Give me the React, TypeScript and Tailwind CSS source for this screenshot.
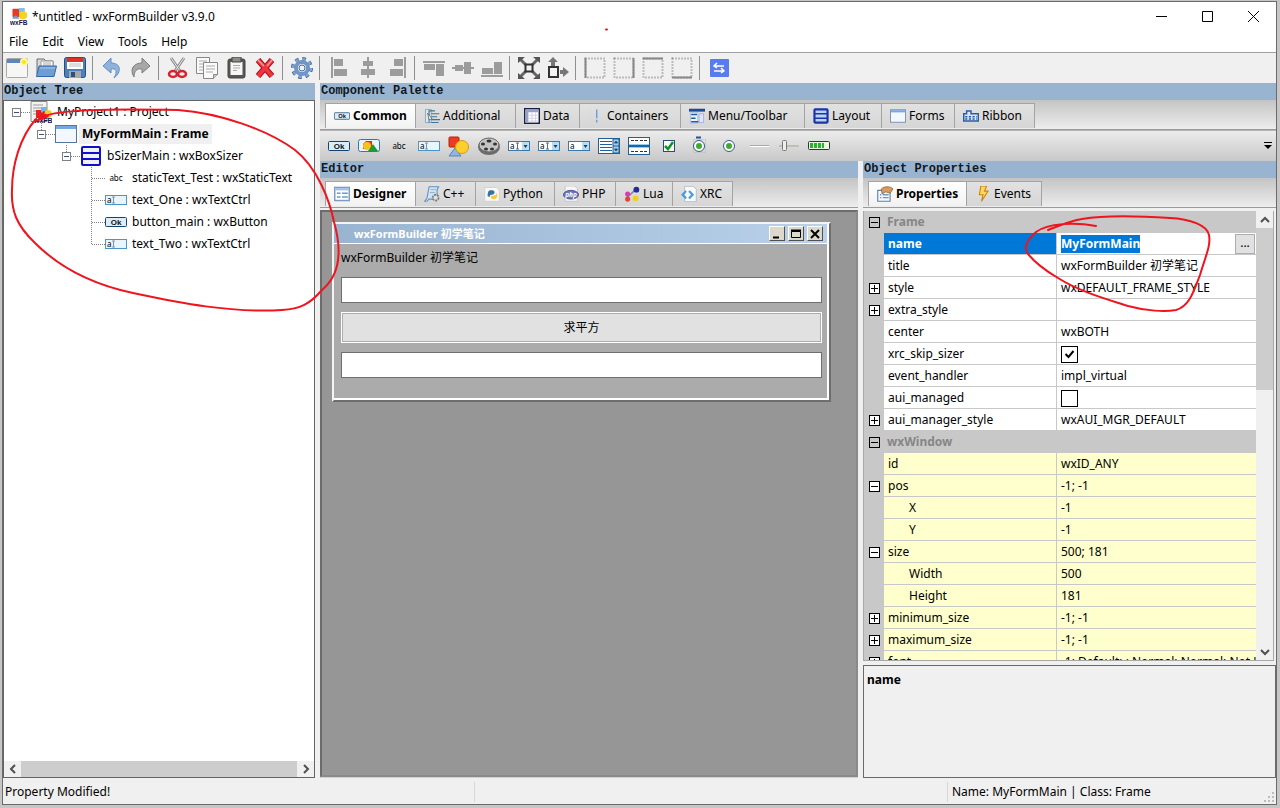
import React, { useState } from 'react';
import { clsx } from 'clsx';

type IconProps = { name: string; className?: string };

const glyphs: Record<string, React.ReactNode> = {
  logo: (
    <>
      <rect x="3" y="1" width="9" height="10" rx="1" fill="#e33b24" />
      <rect x="11" y="0" width="7" height="8" fill="#83bfe8" />
      <circle cx="16" cy="9" r="5" fill="#f8d21c" />
      <path d="M3 12l4-3 5 4H3z" fill="#6aa0d8" />
      <text x="0" y="21" fontFamily="Liberation Sans" fontWeight="bold" fontSize="8" fill="#15154d">wxFB</text>
    </>
  ),
  project: (
    <>
      <path d="M1 .5h16v20H1z" fill="#f3f3f3" stroke="#8b8b8b" />
      <path d="M3 4h10M3 7h10M3 10h7M3 13h5" stroke="#9a9a9a" />
      <rect x="6" y="9" width="8" height="8" fill="#e6201b" />
      <rect x="11" y="6" width="6" height="6" fill="#74b4e4" />
      <circle cx="18" cy="13" r="4" fill="#f5ce25" />
      <text x="4" y="22" fontFamily="Liberation Sans" fontWeight="bold" fontSize="7" fill="#15154d">wxFB</text>
    </>
  ),
  new: (
    <>
      <rect x=".5" y="1.500" width="21" height="19" rx="1" fill="#f6f6f4" stroke="#a9a9a5" />
      <path d="M1 2h20v4H1z" fill="#5c86bd" />
      <circle cx="18" cy="5" r="4" fill="#fff6a0" />
      <circle cx="18" cy="5" r="2" fill="#ffe01a" />
    </>
  ),
  open: (
    <>
      <path d="M2 17V2h7l2 2h7v6" fill="#d9d9d9" stroke="#6d6d6d" />
      <path d="M6 4h12v8H6z" fill="#fff" stroke="#999" />
      <path d="M8 6h8M8 8h8" stroke="#aaa" />
      <path d="M5 9h16.500l-2.500 10.500H1.500L4 9z" fill="#6d9fd6" stroke="#3766a5" />
      <path d="M5 11h15" stroke="#a9c9ec" />
    </>
  ),
  save: (
    <>
      <rect x=".5" y=".5" width="21" height="20" rx="2" fill="#4d7fbd" stroke="#274d83" />
      <path d="M3 1h16v11H3z" fill="#fff" />
      <path d="M3 1h16v4H3z" fill="#dc3226" />
      <path d="M5 7h12M5 9h12" stroke="#bbb" />
      <path d="M5 14h12v7H5z" fill="#a6aaa6" />
      <path d="M7 15h4v5H7z" fill="#2e4f79" />
    </>
  ),
  undo: <path d="M10 1L2 9l8 7v-4c5-1 7 2 3 9 8-6 7-15-3-15z" fill="#8fb3dc" stroke="#5f8fc4" strokeLinejoin="round" />,
  redo: <path d="M12 1l8 8-8 7v-4c-5-1-8 2-8 8-5-8 0-14 8-14z" fill="#a7a9a6" stroke="#7d7f7c" strokeLinejoin="round" />,
  cut: (
    <>
      <path d="M4 1l9 13M17 1L8 14" stroke="#8c8c8c" strokeWidth="3" />
      <path d="M4 1l9 13M17 1L8 14" stroke="#e8e8e8" />
      <ellipse cx="6" cy="17" rx="4" ry="3" fill="none" stroke="#d8212e" strokeWidth="2.500" />
      <ellipse cx="15" cy="17" rx="4" ry="3" fill="none" stroke="#d8212e" strokeWidth="2.500" />
    </>
  ),
  copy: (
    <>
      <path d="M.5.500h13v16H.500z" fill="#fafafa" stroke="#888" />
      <path d="M3 4h8M3 7h8M3 10h5M3 13h5" stroke="#aaa" />
      <path d="M7.500 5.500h14v12l-4 4h-10z" fill="#fafafa" stroke="#888" />
      <path d="M10 9h9M10 12h9M10 15h7" stroke="#aaa" />
      <path d="M17.500 21.500v-4h4" fill="#ccc" stroke="#888" />
    </>
  ),
  paste: (
    <>
      <rect x="3" y="2" width="17" height="19" rx="2" fill="#555753" stroke="#444" />
      <path d="M5.500 5h12v13h-12z" fill="#f7f7f7" />
      <path d="M7 0h9v5H7z" fill="#8a8c88" stroke="#444" />
      <path d="M8 8.500h7M8 11h7M8 13.500h4" stroke="#aaa" />
    </>
  ),
  remove: (
    <>
      <path d="M4 3l14 16M18 3L4 19" stroke="#b50e17" strokeWidth="6" />
      <path d="M4 3l14 16M18 3L4 19" stroke="#ee3640" strokeWidth="4" />
      <path d="M4 3l6 6M18 3l-5 6" stroke="#f99a9e" strokeWidth="1.500" />
    </>
  ),
  gear: (
    <>
      <circle cx="11" cy="11" r="9" fill="none" stroke="#3f6192" strokeWidth="4" strokeDasharray="3.500 3.570" />
      <circle cx="11" cy="11" r="9" fill="none" stroke="#83a6d1" strokeWidth="2.500" strokeDasharray="3 4.070" />
      <circle cx="11" cy="11" r="6" fill="#f1f3f6" stroke="#7096c8" strokeWidth="4" />
      <circle cx="11" cy="11" r="3" fill="#f1f1f1" stroke="#4a6b9c" />
    </>
  ),
  alignLeft: <path d="M3 0h2v21H3zM6 2h9v7H6zM6 12h13v7H6z" fill="#9c9c9c" />,
  alignCenter: <path d="M10 0h2v21h-2zM6 4h10v5H6zM4 12h14v6H4z" fill="#9c9c9c" />,
  alignRight: <path d="M18 0h2v21h-2zM8 2h9v7H8zM4 12h13v7H4z" fill="#9c9c9c" />,
  alignTop: <path d="M0 4h22v2H0zM1 7h11v6H1zM13 7h8v12h-8z" fill="#9c9c9c" />,
  alignMiddle: <path d="M0 10h22v2H0zM3 8h8v6H3zM12 5h7v12h-7z" fill="#9c9c9c" />,
  alignBottom: <path d="M0 18h22v2H0zM1 11h11v6H1zM13 5h8v12h-8z" fill="#9c9c9c" />,
  expand: (
    <>
      <path d="M3 3l16 16M19 3L3 19" stroke="#666" strokeWidth="3" />
      <path d="M0 0h7L0 6zM22 0h-7l7 6zM0 22h7l-7-6zM22 22h-7l7-6z" fill="#555" />
      <rect x="7.500" y="7.500" width="7" height="7" fill="#f0f0f0" stroke="#333" strokeWidth="2" />
    </>
  ),
  stretch: (
    <>
      <path d="M6 0l5 5H8v4H4V5H1zM13 13h3v-3l6 5-6 5v-3h-3z" fill="#777" />
      <rect x="2" y="10" width="9" height="10" fill="#f4f4f4" stroke="#333" strokeWidth="2" />
    </>
  ),
  bLeft: <><rect x="1.500" y="1.500" width="19" height="19" fill="none" stroke="#888" strokeWidth="2" strokeDasharray="1 2" /><path d="M1.500 1v20" stroke="#888" strokeWidth="2" /></>,
  bRight: <><rect x="1.500" y="1.500" width="19" height="19" fill="none" stroke="#888" strokeWidth="2" strokeDasharray="1 2" /><path d="M20.500 1v20" stroke="#888" strokeWidth="2" /></>,
  bTop: <><rect x="1.500" y="1.500" width="19" height="19" fill="none" stroke="#888" strokeWidth="2" strokeDasharray="1 2" /><path d="M1 1.500h20" stroke="#888" strokeWidth="2" /></>,
  bBottom: <><rect x="1.500" y="1.500" width="19" height="19" fill="none" stroke="#888" strokeWidth="2" strokeDasharray="1 2" /><path d="M1 20.500h20" stroke="#888" strokeWidth="2" /></>,
  swap: (
    <>
      <rect x="2" y="2" width="19" height="18" rx="1" fill="#567cf0" />
      <path d="M7 9h9M9 6L6 9l3 2M6 14h9M13 11l3 3-3 2" stroke="#fff" fill="none" strokeWidth="1.500" />
    </>
  ),
  ok: (
    <>
      <rect x=".5" y="6.500" width="21" height="9" rx="1" fill="#dbecfa" stroke="#13446f" />
      <text x="11" y="14" textAnchor="middle" fontFamily="Liberation Sans" fontWeight="bold" fontSize="8" fill="#111">Ok</text>
    </>
  ),
  bitmapButton: (
    <>
      <rect x=".5" y="4.500" width="21" height="12" rx="2" fill="#eaf4fc" stroke="#2b7ab5" />
      <path d="M5 14V9l3-3h6v8z" fill="#e52c20" />
      <circle cx="9" cy="11" r="4" fill="#f6c51d" />
      <path d="M10 16l5-7 5 7z" fill="#1f9a32" />
    </>
  ),
  abc: <text x="11" y="14" textAnchor="middle" fontFamily="Noto Sans" fontSize="8" fill="#000">abc</text>,
  textctrl: (
    <>
      <rect x=".5" y="6.500" width="21" height="9" fill="#e8f5fd" stroke="#4a95cb" />
      <text x="2" y="14" fontFamily="Noto Sans" fontSize="8" fill="#000">a</text>
      <path d="M7 8h3M7 14h3M8.500 8v6" stroke="#8393a0" />
    </>
  ),
  bitmap: (
    <>
      <path d="M1 21l6-8 6 8z" fill="#8bb7e6" stroke="#5484c0" />
      <rect x="1" y="2" width="10" height="10" rx="1" fill="#ec3b22" stroke="#b6230f" />
      <circle cx="14" cy="12" r="6.500" fill="#ffd02b" stroke="#d79a10" />
    </>
  ),
  film: (
    <>
      <ellipse cx="11" cy="12" rx="11" ry="8" fill="#6c6c6c" />
      <ellipse cx="11" cy="10" rx="10" ry="7" fill="#c4c4c4" stroke="#696969" />
      <ellipse cx="11" cy="6" rx="2.500" ry="1.500" fill="#333" />
      <ellipse cx="5" cy="9" rx="2" ry="1.500" fill="#333" />
      <ellipse cx="17" cy="9" rx="2" ry="1.500" fill="#333" />
      <ellipse cx="8" cy="14" rx="2" ry="1.500" fill="#333" />
      <ellipse cx="14" cy="14" rx="2" ry="1.500" fill="#333" />
    </>
  ),
  combo: (
    <>
      <rect x=".5" y="6.500" width="21" height="9" fill="#fff" stroke="#3b79aa" />
      <text x="2" y="14" fontFamily="Noto Sans" fontSize="8" fill="#000">a</text>
      <path d="M8 8h3M8 14h3M9.500 8v6" stroke="#667" />
      <path d="M14 7h7v8h-7z" fill="#b9dcf5" />
      <path d="M15.500 10h4l-2 3z" fill="#173d63" />
    </>
  ),
  choice: (
    <>
      <rect x=".5" y="6.500" width="21" height="9" fill="#fff" stroke="#3b79aa" />
      <text x="2" y="14" fontFamily="Noto Sans" fontSize="8" fill="#000">a</text>
      <path d="M14 7h7v8h-7z" fill="#b9dcf5" />
      <path d="M15.500 10h4l-2 3z" fill="#173d63" />
    </>
  ),
  listbox: (
    <>
      <rect x=".5" y="3.500" width="21" height="15" fill="#fff" stroke="#255f91" />
      <path d="M2 6.500h12M2 9.500h12M2 12.500h12M2 15.500h12" stroke="#1d62a0" />
      <path d="M15 4h6v14h-6z" fill="#a7cbe8" stroke="#255f91" />
      <path d="M16.500 8h3L18 6zM16.500 14h3L18 16zM15 11h6" fill="#123" stroke="#255f91" />
    </>
  ),
  listctrl: (
    <>
      <rect x=".5" y="2.500" width="21" height="17" fill="#fff" stroke="#255f91" />
      <path d="M3 5.500h7M12 5.500h7M3 16.500h7M12 16.500h7" stroke="#333" strokeDasharray="3 1" />
      <path d="M1 9h20v4H1z" fill="#95ccf2" />
      <path d="M1 11h20" stroke="#1767a5" strokeWidth="2" />
    </>
  ),
  check: (
    <>
      <rect x="5.500" y="5.500" width="11" height="11" fill="#fff" stroke="#244f77" />
      <path d="M7 11l3 3 5-7" stroke="#11951c" strokeWidth="2.500" fill="none" />
    </>
  ),
  radiobox: (
    <>
      <path d="M8 2.500h5" stroke="#21539b" strokeWidth="2" />
      <rect x="5.500" y="4.500" width="12" height="13" fill="none" stroke="#bbb" strokeDasharray="1 1" />
      <circle cx="11" cy="11" r="5.500" fill="#fff" stroke="#315b85" />
      <circle cx="11" cy="11" r="3" fill="#3fab2c" />
    </>
  ),
  radio: <><circle cx="11" cy="11" r="5.500" fill="#fff" stroke="#315b85" /><circle cx="11" cy="11" r="3" fill="#3fab2c" /></>,
  line: <><path d="M2 10.500h19" stroke="#aaa" /><path d="M2 11.500h19" stroke="#fff" /></>,
  slider: <><path d="M1 11h20" stroke="#aaa38b" /><rect x="4.500" y="5.500" width="4" height="10" rx="1" fill="#eee" stroke="#777" /></>,
  gauge: (
    <>
      <rect x=".5" y="6.500" width="21" height="8" rx="1" fill="#e6f7e2" stroke="#333" />
      <path d="M2 10.500h14" stroke="#27b527" strokeWidth="5" strokeDasharray="3 1" />
    </>
  ),
  // notebook page icons
  tree: (
    <>
      <path d="M2 2h8v18H2z" fill="#e0e8ee" stroke="#7895aa" />
      <path d="M6 4h9M10 8h11M10 12h8M10 16h12M10 20h10M7 4v16" stroke="#3d7793" strokeWidth="1.500" />
      <path d="M5 7l6 8-4 1z" fill="#fff" stroke="#456" />
    </>
  ),
  table: (
    <>
      <rect x="1" y="1" width="20" height="20" fill="#fff" stroke="#19223a" strokeWidth="2" />
      <path d="M2 2h18v4H2zM2 6h4v14H2z" fill="#9aa1cc" />
      <path d="M6 10h14M6 14h14M6 18h14M11 6v14M16 6v14" stroke="#c3c6d6" />
    </>
  ),
  splitter: <><path d="M3 2v18M1 4h4" stroke="#d6d7e5" strokeDasharray="2 2" /><path d="M12 2v18" stroke="#6f9ee0" strokeWidth="2" strokeDasharray="12 2" /></>,
  menu: (
    <>
      <path d="M0 1h22v4H0z" fill="#1d4c92" />
      <path d="M2 6h10v15H2z" fill="#edf3fa" stroke="#9bb7d8" />
      <path d="M3 9h8M3 14h6M3 19h10" stroke="#1f5b9d" strokeWidth="2" />
      <path d="M14 8h6v12h-6z" fill="#dfe4ff" stroke="#9ba5de" />
    </>
  ),
  sizer: (
    <>
      <rect x="2" y="2" width="18" height="18" rx="1" fill="#b9d3f5" stroke="#1b35a8" strokeWidth="3" />
      <path d="M2 8h18M2 14h18" stroke="#1b35a8" strokeWidth="2" />
    </>
  ),
  boxsizer: (
    <>
      <rect x="2" y="2" width="18" height="18" rx="1" fill="#f0f0ff" stroke="#1010c8" strokeWidth="2" />
      <path d="M2 8h18M2 14h18" stroke="#1010c8" strokeWidth="2" />
    </>
  ),
  form: (
    <>
      <rect x=".5" y="2.500" width="21" height="17" fill="#f2f8fe" stroke="#55779c" />
      <path d="M1 3h20v3H1z" fill="#78a8e0" />
    </>
  ),
  ribbon: (
    <>
      <path d="M1 8h4V4h6v4h10v10H1z" fill="#d9e6f8" stroke="#2a5ca3" strokeWidth="2" />
      <path d="M3 12h16M3 15h16" stroke="#2a5ca3" strokeWidth="2" strokeDasharray="3 2" />
    </>
  ),
  designer: (
    <>
      <rect x="1" y="2" width="20" height="18" fill="#fff" stroke="#7a9cc4" strokeWidth="2" />
      <path d="M2 3h18v3H2z" fill="#9dc0ea" />
      <path d="M4 10h5M11 10h8M4 15h5M11 15h8" stroke="#6b9ccd" strokeWidth="2" />
    </>
  ),
  script: (
    <>
      <path d="M7 1h13l-2 4v13H7l-3 3H1l3-4z" fill="#cfe3f6" stroke="#6892b8" strokeWidth="1.500" />
      <path d="M9 5h7M8 9h7" stroke="#7ba2c4" />
      <circle cx="16" cy="16" r="4" fill="#e1e1e1" stroke="#808080" strokeWidth="2.500" strokeDasharray="3 1" />
    </>
  ),
  python: (
    <>
      <path d="M1 2h16l4 4v15H1z" fill="#f8f8f8" stroke="#ccc" />
      <path d="M5 14c0-8 2-9 7-8 4 1 3 6-1 6-3 0-3 1-3 3z" fill="#3572a8" />
      <path d="M17 9c3 6 0 10-5 9-4-1-3-5 1-5 3 0 4-1 4-4z" fill="#f6cc36" />
    </>
  ),
  php: (
    <>
      <path d="M3 0h13l4 4v17H3z" fill="#f7f7f9" stroke="#b9bbc4" />
      <ellipse cx="11" cy="12" rx="10.500" ry="6" fill="#7076b3" stroke="#35407f" />
      <text x="11" y="15" textAnchor="middle" fontFamily="Noto Sans" fontStyle="italic" fontWeight="bold" fontSize="9" fill="#fff">php</text>
    </>
  ),
  lua: (
    <>
      <path d="M4 16L17 4" stroke="#889" strokeWidth="2" />
      <circle cx="17" cy="5" r="4" fill="#2129a3" />
      <circle cx="5" cy="11" r="3.500" fill="#d93bb6" />
      <circle cx="5" cy="18" r="3.500" fill="#e4432d" />
      <circle cx="16" cy="17" r="4" fill="#f2cf23" />
    </>
  ),
  xrc: (
    <>
      <path d="M5 .5h12l4 4v17H5z" fill="#f8fafc" stroke="#a5afbb" />
      <path d="M7 7l-5 5 5 5M11 7l5 5-5 5" fill="none" stroke="#4b9be0" strokeWidth="3" />
    </>
  ),
  props: (
    <>
      <path d="M1 6h17v15H1z" fill="#f5f9fd" stroke="#5c7fa5" strokeWidth="1.500" />
      <path d="M4 12h2M8 12h8M4 16h2M8 16h8" stroke="#699bc6" strokeWidth="2" />
      <path d="M6 4c4-4 12-4 16 0l-4 6-6-2-5 3z" fill="#d79a60" stroke="#8e5a2a" />
    </>
  ),
  bolt: <path d="M8 0h8l-3 7h5L9 21l2-9H6z" fill="#ffd75a" stroke="#ce8110" strokeWidth="1.500" />,
};

function Icon({ name, className = 'size-[22px]' }: IconProps) {
  return (
    <svg viewBox="0 0 22 22" className={clsx('shrink-0', className)} fill="none" aria-hidden="true">
      {glyphs[name]}
    </svg>
  );
}

const toolGroups = [
  ['new', 'open', 'save'],
  ['undo', 'redo'],
  ['cut', 'copy', 'paste', 'remove'],
  ['gear'],
  ['alignLeft', 'alignCenter', 'alignRight'],
  ['alignTop', 'alignMiddle', 'alignBottom'],
  ['expand', 'stretch'],
  ['bLeft', 'bRight', 'bTop', 'bBottom'],
  ['swap'],
];

const paletteItems = [
  'ok', 'bitmapButton', 'abc', 'textctrl', 'bitmap', 'film', 'combo', 'combo', 'choice',
  'listbox', 'listctrl', 'check', 'radiobox', 'radio', 'line', 'slider', 'gauge',
];

type Tab = { label: string; icon: string; width: string };

const paletteTabs: Tab[] = [
  { label: 'Common', icon: 'ok', width: 'w-[91px]' },
  { label: 'Additional', icon: 'tree', width: 'w-[100px]' },
  { label: 'Data', icon: 'table', width: 'w-[64px]' },
  { label: 'Containers', icon: 'splitter', width: 'w-[101px]' },
  { label: 'Menu/Toolbar', icon: 'menu', width: 'w-[124px]' },
  { label: 'Layout', icon: 'sizer', width: 'w-[77px]' },
  { label: 'Forms', icon: 'form', width: 'w-[73px]' },
  { label: 'Ribbon', icon: 'ribbon', width: 'w-[80px]' },
];

const editorTabs: Tab[] = [
  { label: 'Designer', icon: 'designer', width: 'w-[91px]' },
  { label: 'C++', icon: 'script', width: 'w-[60px]' },
  { label: 'Python', icon: 'python', width: 'w-[79px]' },
  { label: 'PHP', icon: 'php', width: 'w-[61px]' },
  { label: 'Lua', icon: 'lua', width: 'w-[57px]' },
  { label: 'XRC', icon: 'xrc', width: 'w-[60px]' },
];

const propertyTabs: Tab[] = [
  { label: 'Properties', icon: 'props', width: 'w-[99px]' },
  { label: 'Events', icon: 'bolt', width: 'w-[75px]' },
];

function Tabs({ tabs }: { tabs: Tab[] }) {
  const [active, setActive] = useState(tabs[0].label);
  return (
    <div role="tablist" className="flex h-[30px] shrink-0 items-end border-b border-[#9a9a9a] bg-linear-to-b from-[#c4c4c4] to-[#ededed] pb-px pl-[5px]">
      {tabs.map((tab) => (
        <button
          key={tab.label}
          role="tab"
          aria-selected={active === tab.label}
          onClick={() => setActive(tab.label)}
          className={clsx(
            'flex h-[25px] shrink-0 items-center gap-[3px] border-t border-r border-[#a3a3a3] pl-2 whitespace-nowrap',
            tab.width,
            active === tab.label
              ? 'border-l bg-linear-to-b from-white to-[#f2f2f2] font-bold'
              : 'bg-linear-to-b from-[#e2e2e2] to-[#d6d6d6]',
          )}
        >
          <Icon name={tab.icon} className="size-4" />
          {tab.label}
        </button>
      ))}
    </div>
  );
}

function Caption({ children }: { children: React.ReactNode }) {
  return (
    <h2 className="h-[17px] shrink-0 bg-[#99b4d1] pl-px font-['Liberation_Mono',monospace] text-[12px] leading-[17px] font-bold text-[#101820]">
      {children}
    </h2>
  );
}

const treeNodes = [
  { level: 0, icon: 'project', text: 'MyProject1 : Project', pad: '' },
  { level: 1, icon: 'form', text: 'MyFormMain : Frame', pad: 'pl-[25px]' },
  { level: 2, icon: 'boxsizer', text: 'bSizerMain : wxBoxSizer', pad: 'pl-[50px]' },
  { level: 3, icon: 'abc', text: 'staticText_Test : wxStaticText', pad: 'pl-[75px]' },
  { level: 3, icon: 'textctrl', text: 'text_One : wxTextCtrl', pad: 'pl-[75px]' },
  { level: 3, icon: 'ok', text: 'button_main : wxButton', pad: 'pl-[75px]' },
  { level: 3, icon: 'textctrl', text: 'text_Two : wxTextCtrl', pad: 'pl-[75px]' },
];

function TreeGuide({ level, last }: { level: number; last: boolean }) {
  return (
    <svg viewBox="0 0 18 22" className="h-[22px] w-[18px] shrink-0" fill="none" stroke="#808080" aria-hidden="true">
      {level === 3 ? (
        <path d={last ? 'M4.500 0v11.500H18' : 'M4.500 0v22M5 11.500h13'} strokeDasharray="1 1" />
      ) : (
        <>
          <path d={level ? 'M4.500 0v7M9 11.500h9' : 'M9 11.500h9'} strokeDasharray="1 1" />
          <rect x=".5" y="7.500" width="8" height="8" fill="#fff" />
          <path d="M2 11.500h5" stroke="#3b4f81" />
        </>
      )}
    </svg>
  );
}

function ObjectTree() {
  return (
    <aside className="flex w-[312px] shrink-0 flex-col">
      <Caption>Object Tree</Caption>
      <div className="flex min-h-0 flex-1 flex-col border border-[#646464] bg-white">
        <ul role="tree" className="flex-1 pl-2">
          {treeNodes.map((node, i) => (
            <li key={node.text} role="treeitem" className={clsx('flex h-[22px] items-center', node.pad)}>
              <TreeGuide level={node.level} last={i === treeNodes.length - 1} />
              <Icon name={node.icon} />
              <span className={clsx('ml-0.5 px-[3px] leading-5 whitespace-nowrap', node.level === 1 && 'bg-[#f0f0f0] font-bold')}>
                {node.text}
              </span>
            </li>
          ))}
        </ul>
        <div className="flex h-4 items-center bg-[#f0f0f0]">
          <ScrollButton label="Scroll left" d="M10 4L6 8l4 4" />
          <div className="h-full flex-1 bg-[#cdcdcd]" />
          <ScrollButton label="Scroll right" d="M6 4l4 4-4 4" />
        </div>
      </div>
    </aside>
  );
}

function ScrollButton({ label, d }: { label: string; d: string }) {
  return (
    <button aria-label={label} className="flex size-[17px] shrink-0 items-center justify-center">
      <svg viewBox="0 0 16 16" className="size-4" fill="none" stroke="#505050" strokeWidth="2">
        <path d={d} />
      </svg>
    </button>
  );
}

function Palette() {
  return (
    <section className="flex shrink-0 flex-col">
      <Caption>Component Palette</Caption>
      <Tabs tabs={paletteTabs} />
      <div className="flex h-[31px] items-center border-t border-[#b4b4b4] bg-linear-to-b from-[#ececec] to-[#c8c8c8] pr-1 pl-1">
        {paletteItems.map((item, i) => (
          <button key={i} aria-label={item} className="flex w-[30px] shrink-0 justify-center">
            <Icon name={item} />
          </button>
        ))}
        <button aria-label="More components" className="ml-auto">
          <svg viewBox="0 0 8 8" className="size-2">
            <path d="M0 .5h8" stroke="#000" />
            <path d="M0 3h8L4 7z" />
          </svg>
        </button>
      </div>
    </section>
  );
}

function FormButton({ label, children }: { label: string; children: React.ReactNode }) {
  return (
    <button aria-label={label} className="flex h-[15px] w-4 items-center justify-center border border-t-white border-r-[#505050] border-b-[#505050] border-l-white bg-[#dcd9cc]">
      <svg viewBox="0 0 12 12" className="size-3" fill="none" stroke="#000" strokeWidth="2">
        {children}
      </svg>
    </button>
  );
}

function Designer() {
  return (
    <main className="flex min-w-0 flex-1 flex-col">
      <Caption>Editor</Caption>
      <Tabs tabs={editorTabs} />
      <div className="min-h-0 flex-1 border-b border-[#d0d0d0] bg-[#f0f0f0] pt-[2px]">
        <div className="h-full overflow-hidden border-2 border-[#6c6c6c] border-r-[#8a8a8a] border-b-[#8a8a8a] bg-[#969696] pt-[10px] pl-[10px]">
          <div className="w-[499px] border-2 border-t-[#f4f4f4] border-r-[#6e6e6e] border-b-[#6e6e6e] border-l-[#f4f4f4]">
            <div className="border-r-2 border-b-2 border-white bg-[#ababab]">
              <div className="flex h-5 items-center gap-[3px] border-b border-white bg-linear-to-r from-[#99b4d1] to-[#b9d1ea] pr-1 pl-5 text-[11px] font-bold text-white">
                <span className="flex-1">wxFormBuilder 初学笔记</span>
                <FormButton label="Minimize form"><path d="M2 9.500h6" /></FormButton>
                <FormButton label="Maximize form"><path d="M1.500 3.500h9v6h-9z" strokeWidth="1" /><path d="M1 2.500h10" /></FormButton>
                <FormButton label="Close form"><path d="M2 2l8 8M10 2l-8 8" /></FormButton>
              </div>
              <div className="flex flex-col gap-[9px] pt-1 pr-[5px] pb-5 pl-[7px]">
                <label htmlFor="text-one" className="h-5 leading-5">wxFormBuilder 初学笔记</label>
                <input id="text-one" className="h-[26px] border border-[#6f6f6f] bg-white px-1" />
                <button className="h-[31px] border border-white bg-[#adadad] p-px">
                  <span className="flex h-full items-center justify-center bg-[#e1e1e1]">求平方</span>
                </button>
                <input aria-label="text_Two" className="h-[26px] border border-[#6f6f6f] bg-white px-1" />
              </div>
            </div>
          </div>
        </div>
      </div>
    </main>
  );
}

type Prop = {
  name: string;
  value?: string;
  checked?: boolean;
  sign?: '+' | '-';
  group?: boolean;
  child?: boolean;
  inherited?: boolean;
};

const properties: Prop[] = [
  { name: 'Frame', group: true, sign: '-' },
  { name: 'name', value: 'MyFormMain' },
  { name: 'title', value: 'wxFormBuilder 初学笔记' },
  { name: 'style', value: 'wxDEFAULT_FRAME_STYLE', sign: '+' },
  { name: 'extra_style', value: '', sign: '+' },
  { name: 'center', value: 'wxBOTH' },
  { name: 'xrc_skip_sizer', checked: true },
  { name: 'event_handler', value: 'impl_virtual' },
  { name: 'aui_managed', checked: false },
  { name: 'aui_manager_style', value: 'wxAUI_MGR_DEFAULT', sign: '+' },
  { name: 'wxWindow', group: true, sign: '-' },
  { name: 'id', value: 'wxID_ANY', inherited: true },
  { name: 'pos', value: '-1; -1', sign: '-', inherited: true },
  { name: 'X', value: '-1', child: true, inherited: true },
  { name: 'Y', value: '-1', child: true, inherited: true },
  { name: 'size', value: '500; 181', sign: '-', inherited: true },
  { name: 'Width', value: '500', child: true, inherited: true },
  { name: 'Height', value: '181', child: true, inherited: true },
  { name: 'minimum_size', value: '-1; -1', sign: '+', inherited: true },
  { name: 'maximum_size', value: '-1; -1', sign: '+', inherited: true },
  { name: 'font', value: '-1; Default; ; Normal; Normal; Not Underlined', sign: '+', inherited: true },
];

function PropertyRow({ prop, selected, onSelect }: { prop: Prop; selected: boolean; onSelect: () => void }) {
  const [checked, setChecked] = useState(!!prop.checked);
  const sign = prop.sign && (
    <button aria-label={`Toggle ${prop.name}`} className="flex items-center">
      <svg viewBox="0 0 11 11" className="size-[11px]" stroke="#000">
        <rect x=".5" y=".5" width="10" height="10" fill={prop.group ? '#c8c8c8' : '#fff'} />
        <path d={prop.sign === '+' ? 'M2 5.500h7M5.500 2v7' : 'M2 5.500h7'} />
      </svg>
    </button>
  );
  if (prop.group) {
    return (
      <tr className="h-[22px] bg-[#c8c8c8] font-bold text-[#868686]">
        <td className="pl-[5px]">{sign}</td>
        <th colSpan={2} className="pl-[3px] text-left">{prop.name}</th>
      </tr>
    );
  }
  return (
    <tr className="h-[22px]" onClick={onSelect}>
      <td className="bg-[#c8c8c8] pl-[5px]">{sign}</td>
      <th
        scope="row"
        className={clsx(
          'border-b border-[#c8c8c8] text-left',
          prop.child ? 'pl-[25px]' : 'pl-1',
          selected ? 'bg-[#0078d7] font-bold text-white' : 'font-normal',
          !selected && (prop.inherited ? 'bg-[#ffffcd]' : 'bg-white'),
        )}
      >
        {prop.name}
      </th>
      <td className={clsx('overflow-hidden border-b border-l border-[#c8c8c8] pl-1 whitespace-nowrap', prop.inherited ? 'bg-[#ffffcd]' : 'bg-white')}>
        {prop.checked !== undefined ? (
          <label className="mt-0.5 flex size-[17px] items-center justify-center border border-black bg-white">
            <input type="checkbox" aria-label={prop.name} checked={checked} onChange={(e) => setChecked(e.target.checked)} className="size-0 appearance-none" />
            {checked && (
              <svg viewBox="0 0 11 11" className="size-[11px] shrink-0" fill="none" stroke="#000" strokeWidth="2">
                <path d="M1.500 5l3 3L9.500 2" />
              </svg>
            )}
          </label>
        ) : selected ? (
          <div className="flex h-[21px] items-center justify-between">
            <input aria-label={prop.name} defaultValue={prop.value} className="h-[18px] bg-[#0078d7] font-bold text-white [field-sizing:content]" />
            <button aria-label="Edit value" className="mr-px flex size-5 justify-center border border-[#adadad] bg-[#e1e1e1] leading-4">...</button>
          </div>
        ) : (
          prop.value
        )}
      </td>
    </tr>
  );
}

function Properties() {
  const [selected, setSelected] = useState('name');
  return (
    <aside className="flex w-[413px] shrink-0 flex-col">
      <Caption>Object Properties</Caption>
      <Tabs tabs={propertyTabs} />
      <div className="mt-[3px] mr-[2px] flex min-h-0 flex-1 overflow-hidden border-x border-b border-[#a8a8a8] bg-white">
        <div className="min-w-0 flex-1 overflow-hidden">
          <table className="w-full table-fixed border-separate border-spacing-0 leading-5">
            <colgroup>
              <col className="w-[20px]" />
              <col className="w-[172px]" />
              <col />
            </colgroup>
            <tbody>
              {properties.map((prop) => (
                <PropertyRow key={prop.name} prop={prop} selected={selected === prop.name} onSelect={() => setSelected(prop.name)} />
              ))}
            </tbody>
          </table>
        </div>
        <div className="flex w-[17px] shrink-0 flex-col bg-[#f0f0f0]">
          <ScrollButton label="Scroll up" d="M4 10l4-4 4 4" />
          <div className="flex-1">
            <div className="h-[39%] bg-[#cdcdcd]" />
          </div>
          <ScrollButton label="Scroll down" d="M4 6l4 4 4-4" />
        </div>
      </div>
      <div className="mt-1 h-[113px] shrink-0 border border-[#6a6a6a] bg-[#f0f0f0] px-[3px] pt-1 leading-5 font-bold">
        {selected}
      </div>
    </aside>
  );
}

// hand-drawn marks over the tree and the property value
function Marks() {
  return (
    <svg className="pointer-events-none absolute inset-0 h-[404px] w-[1280px]" viewBox="0 0 1280 404" fill="none" stroke="#f0141e" strokeWidth="2" strokeLinecap="round" aria-hidden="true">
      <path d="M42 117C60 109 110 109 178 110C220 113 268 130 295 150C318 168 330 202 334 222C342 250 340 275 322 290C310 304 300 309 282 310C230 313 180 303 133 293C95 285 60 268 35 243C16 225 11 210 12 190C12 165 20 137 36 119" />
      <path d="M44 112l-6 8 8-3-6-4 8 3" />
      <path d="M1096 226C1075 222 1048 223 1036 232C1028 239 1023 247 1028 254C1037 265 1048 272 1058 278C1080 292 1110 300 1128 306C1146 311 1165 312 1176 310C1190 306 1194 290 1200 275C1206 255 1211 245 1209 235C1207 225 1190 219 1170 218C1140 216 1105 215 1082 219C1070 221 1058 226 1048 230" />
      <path d="M606 29.500h1" />
    </svg>
  );
}

export default function App() {
  return (
    <div className="relative h-screen overflow-hidden bg-[#c6c6c6] pt-px pr-[3px] pb-[3px] pl-0.5 font-['Noto_Sans','Noto_Sans_CJK_SC',sans-serif] text-[12px] leading-4 text-black">
      <div className="flex h-full flex-col border border-[#6b6b6b] bg-[#f0f0f0]">
        <header className="shrink-0 border-b border-[#a0a0a0] bg-white">
          <div className="flex h-[29px] items-center">
            <Icon name="logo" className="ml-[7px] size-[18px]" />
            <h1 className="ml-1 flex-1">*untitled - wxFormBuilder v3.9.0</h1>
            {[
              ['Minimize', 'M1 6.500h11'],
              ['Maximize', 'M1.500 1.500h10v10h-10z'],
              ['Close', 'M1 1l11 11M12 1L1 12'],
            ].map(([label, d]) => (
              <button key={label} aria-label={label} className="flex h-7 w-[46px] items-center justify-center">
                <svg viewBox="0 0 13 13" className="size-[13px]" fill="none" stroke="#000">
                  <path d={d} />
                </svg>
              </button>
            ))}
          </div>
          <nav className="flex h-[21px] items-center gap-[14px] pl-1.5">
            {['File', 'Edit', 'View', 'Tools', 'Help'].map((item) => (
              <button key={item}>{item}</button>
            ))}
          </nav>
        </header>

        <div role="toolbar" className="flex h-[30px] shrink-0 items-center">
          {toolGroups.map((group, g) => (
            <div key={g} className={clsx('flex items-center', g > 0 && 'border-l border-[#8f8f8f] pl-[5px]', g < toolGroups.length - 1 && 'pr-0.5')}>
              {group.map((name) => (
                <button key={name} aria-label={name} className="flex h-6 w-[29px] items-center justify-center pr-0.5">
                  <Icon name={name} />
                </button>
              ))}
            </div>
          ))}
        </div>

        <div className="flex min-h-0 flex-1 gap-[5px]">
          <ObjectTree />
          <div className="flex min-w-0 flex-1 flex-col">
            <Palette />
            <div className="flex min-h-0 flex-1 gap-[5px]">
              <Designer />
              <Properties />
            </div>
          </div>
        </div>

        <footer className="flex h-[26px] shrink-0 items-center pt-px">
          <span className="w-[472px] shrink-0 border-r border-[#d7d7d7] pl-0.5 leading-5">Property Modified!</span>
          <span className="h-5 flex-1 border-r border-[#d7d7d7]" />
          <span className="w-[328px] shrink-0 pl-1 leading-5">Name: MyFormMain | Class: Frame</span>
          <svg viewBox="0 0 12 12" className="absolute right-1 bottom-1 size-3" fill="#bdbdbd" aria-hidden="true">
            <path d="M8 0h2v2H8zM4 4h2v2H4zM8 4h2v2H8zM0 8h2v2H0zM4 8h2v2H4zM8 8h2v2H8z" />
          </svg>
        </footer>
      </div>
      <Marks />
    </div>
  );
}
